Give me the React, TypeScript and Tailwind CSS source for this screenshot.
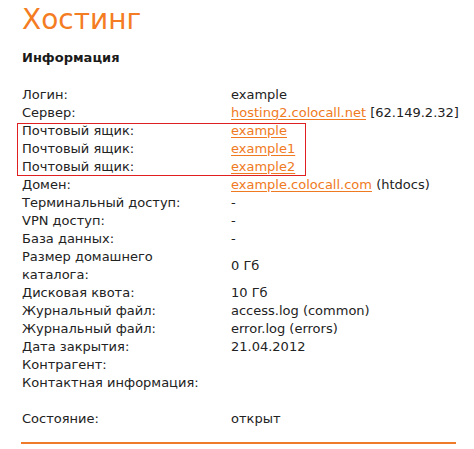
import React from "react";

const Link = ({ children }: { children: React.ReactNode }) => (
  <a href="#" className="text-[#f07a22] underline underline-offset-[2px]">
    {children}
  </a>
);

const Row = ({ label, value }: { label: React.ReactNode; value?: React.ReactNode }) => (
  <div className="flex items-center">
    <div className="w-[209px] shrink-0 pr-[10px] whitespace-nowrap">{label}</div>
    <div className="flex-1 whitespace-nowrap">{value}</div>
  </div>
);

export default function App() {
  return (
    <div
      className="w-[474px] h-[449px] bg-white text-[#222] overflow-hidden"
      style={{ fontFamily: '"DejaVu Sans", sans-serif' }}
    >
      <div className="pl-[22px] pr-[18px]">
        <h1 className="text-[28px] leading-[30px] pt-[5px] text-[#f47c22] font-normal">Хостинг</h1>
        <h2 className="text-[13px] font-bold leading-[18px] mt-[14px] text-[#1a1a1a]">Информация</h2>
        <div className="mt-[19px] text-[13px] leading-[18px]">
          <Row label="Логин:" value="example" />
          <Row
            label="Сервер:"
            value={
              <>
                <Link>hosting2.colocall.net</Link> [62.149.2.32]
              </>
            }
          />
          <div className="relative">
            <div className="absolute left-[-4px] top-[2px] w-[287px] h-[51px] shadow-[0_0_0_1px_#e02020] pointer-events-none" />
            <Row label="Почтовый ящик:" value={<Link>example</Link>} />
            <Row label="Почтовый ящик:" value={<Link>example1</Link>} />
            <Row label="Почтовый ящик:" value={<Link>example2</Link>} />
          </div>
          <Row
            label="Домен:"
            value={
              <>
                <Link>example.colocall.com</Link> (htdocs)
              </>
            }
          />
          <Row label="Терминальный доступ:" value="-" />
          <Row label="VPN доступ:" value="-" />
          <Row label="База данных:" value="-" />
          <Row label={<>Размер домашнего<br />каталога:</>} value="0 Гб" />
          <Row label="Дисковая квота:" value="10 Гб" />
          <Row label="Журнальный файл:" value="access.log (common)" />
          <Row label="Журнальный файл:" value="error.log (errors)" />
          <Row label="Дата закрытия:" value="21.04.2012" />
          <Row label="Контрагент:" value="" />
          <Row label="Контактная информация:" value="" />
          <div className="h-[18px]" />
          <Row label="Состояние:" value="открыт" />
        </div>
        <div className="mt-[14px] ml-[-1px] w-[435px] h-[2px] bg-[#ef7a2c]" />
      </div>
    </div>
  );
}
